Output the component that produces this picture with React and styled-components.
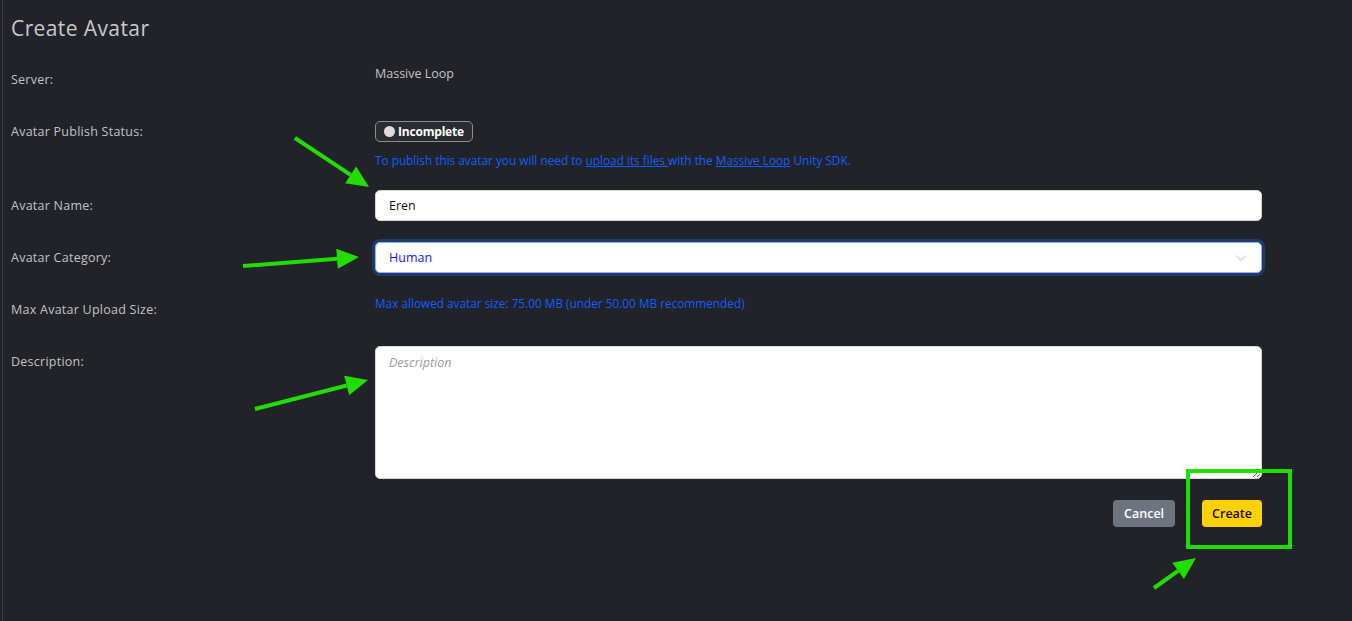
import React from 'react'
import styled, { createGlobalStyle } from 'styled-components'

const GlobalStyle = createGlobalStyle`
  html, body {
    margin: 0;
    padding: 0;
    background: #212329;
    font-family: "Open Sans", "Liberation Sans", sans-serif;
  }
`

const Page = styled.div`
  position: relative;
  min-height: 621px;
  margin-left: 2px;
  border-left: 1px solid #3a3d44;
  padding: 16px 90px 40px 8px;
  box-sizing: border-box;
`

const Title = styled.h1`
  margin: 0 0 24px;
  font-size: 21px;
  line-height: 24px;
  font-weight: 500;
  letter-spacing: 0.4px;
  color: #c9c9c9;
`

const Row = styled.div`
  display: grid;
  grid-template-columns: 364px 1fr;
  align-items: start;
  margin-bottom: ${p => p.$gap ?? 21}px;
`

const Label = styled.div`
  font-size: 12.5px;
  line-height: 31px;
  font-weight: 500;
  letter-spacing: 0.25px;
  color: #c2c2c2;
`

const Value = styled.div`
  display: flex;
  flex-direction: column;
`

const Text = styled.div`
  font-size: 12.5px;
  line-height: 19px;
  font-weight: 500;
  color: #c4c4c4;
`

const BadgeWrap = styled.div`
  height: 31px;
  display: flex;
  align-items: center;
`

const Badge = styled.span`
  display: inline-flex;
  align-items: center;
  gap: 3px;
  height: 21px;
  padding: 0 8px;
  box-sizing: border-box;
  border: 1px solid #8a8c90;
  border-radius: 5px;
  background: #2a2c31;
  color: #fff;
  font-size: 12px;
  font-weight: 700;
  letter-spacing: -0.2px;
`

const Dot = styled.span`
  width: 11px;
  height: 11px;
  border-radius: 50%;
  background: #dcdcdc;
`

const Help = styled.div`
  margin-top: ${p => (p.$flush ? 0 : 4)}px;
  font-size: 11.8px;
  line-height: 18px;
  font-weight: 500;
  color: #0f5fff;

  a {
    color: inherit;
    text-decoration: underline;
  }
`

const Input = styled.input`
  height: 31px;
  box-sizing: border-box;
  border: 1px solid #d5d5d5;
  border-radius: 5px;
  background: #fff;
  padding: 0 13px;
  font-family: inherit;
  font-size: 12.5px;
  font-weight: 500;
  color: #111;
  outline: none;
`

const SelectBox = styled.div`
  height: 31px;
  box-sizing: border-box;
  border: 1px solid #86b7fe;
  border-radius: 5px;
  background: #fff;
  box-shadow: 0 0 0 3px #1f3a68;
  display: flex;
  align-items: center;
  justify-content: space-between;
  padding: 0 14px 0 13px;
  font-size: 12.5px;
  font-weight: 500;
  color: #1414ff;
`

const TextArea = styled.textarea`
  height: 133px;
  box-sizing: border-box;
  border: 1px solid #d5d5d5;
  border-radius: 5px;
  background: #fff;
  padding: 7px 13px;
  font-family: inherit;
  font-size: 12.5px;
  resize: vertical;
  outline: none;

  &::placeholder {
    color: #9a9a9a;
    font-style: italic;
  }
`

const Actions = styled.div`
  display: flex;
  justify-content: flex-end;
  gap: 27px;
  margin-top: 21px;
`

const Button = styled.button`
  height: 27px;
  padding: 0 ${p => (p.$primary ? 10 : 11)}px;
  border: none;
  border-radius: 4px;
  font-family: inherit;
  font-size: 12.5px;
  font-weight: 600;
  background: ${p => (p.$primary ? '#ffd200' : '#6c757d')};
  color: ${p => (p.$primary ? '#111' : '#fff')};
  cursor: pointer;
`

const Overlay = styled.svg`
  position: absolute;
  left: -3px;
  top: 0;
  width: 1352px;
  height: 621px;
  pointer-events: none;
`

const GREEN = '#22dd00'

function Arrow({ x1, y1, x2, y2 }) {
  const ang = Math.atan2(y2 - y1, x2 - x1)
  const len = 22
  const w = 10
  const bx = x2 - len * Math.cos(ang)
  const by = y2 - len * Math.sin(ang)
  const px = -Math.sin(ang) * w
  const py = Math.cos(ang) * w
  return (
    <g>
      <line x1={x1} y1={y1} x2={bx} y2={by} stroke={GREEN} strokeWidth="4" />
      <polygon points={`${x2},${y2} ${bx + px},${by + py} ${bx - px},${by - py}`} fill={GREEN} />
    </g>
  )
}

export default function App() {
  return (
    <>
      <GlobalStyle />
      <Page>
        <Title>Create Avatar</Title>

        <Row>
          <Label>Server:</Label>
          <Value>
            <Text>Massive Loop</Text>
          </Value>
        </Row>

        <Row>
          <Label>Avatar Publish Status:</Label>
          <Value>
            <BadgeWrap>
              <Badge>
                <Dot />
                Incomplete
              </Badge>
            </BadgeWrap>
            <Help>
              To publish this avatar you will need to <a href="#">upload its files </a> with the{' '}
              <a href="#">Massive Loop</a> Unity SDK.
            </Help>
          </Value>
        </Row>

        <Row>
          <Label>Avatar Name:</Label>
          <Input defaultValue="Eren" />
        </Row>

        <Row>
          <Label>Avatar Category:</Label>
          <SelectBox>
            <span>Human</span>
            <svg width="12" height="8" viewBox="0 0 12 8" fill="none">
              <path d="M1 1.5 L6 6.5 L11 1.5" stroke="#d8d8d8" strokeWidth="1.3" />
            </svg>
          </SelectBox>
        </Row>

        <Row>
          <Label>Max Avatar Upload Size:</Label>
          <Value>
            <Help $flush>Max allowed avatar size: 75.00 MB (under 50.00 MB recommended)</Help>
          </Value>
        </Row>

        <Row $gap={0}>
          <Label>Description:</Label>
          <TextArea placeholder="Description" />
        </Row>

        <Actions>
          <Button>Cancel</Button>
          <Button $primary>Create</Button>
        </Actions>

        <Overlay viewBox="0 0 1352 621">
          <Arrow x1={295} y1={138} x2={369} y2={187} />
          <Arrow x1={243} y1={266} x2={359} y2={257} />
          <Arrow x1={255} y1={409} x2={368} y2={380} />
          <Arrow x1={1154} y1={588} x2={1196} y2={558} />
          <rect x="1188" y="471" width="102" height="76" fill="none" stroke={GREEN} strokeWidth="4" />
        </Overlay>
      </Page>
    </>
  )
}
